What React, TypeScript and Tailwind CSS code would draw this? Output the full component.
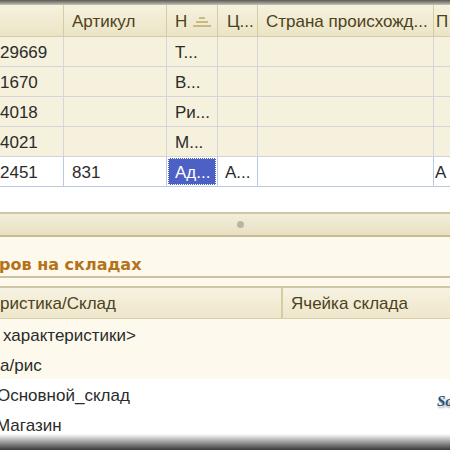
import React from "react";

const cols = [64, 103, 51, 40, 176, 16];

function HeaderCell({ w, children, last }: { w: number; children?: React.ReactNode; last?: boolean }) {
  return (
    <div
      className={`shrink-0 h-full flex items-center pt-[2px] overflow-hidden whitespace-nowrap ${last ? "" : "border-r border-[#d6cca3]"}`}
      style={{ width: w }}
    >
      {children}
    </div>
  );
}

function Cell({ w, children, last, sel }: { w: number; children?: React.ReactNode; last?: boolean; sel?: boolean }) {
  return (
    <div
      className={`shrink-0 h-full flex items-center pt-[2px] overflow-hidden whitespace-nowrap ${last ? "" : sel ? "border-r border-[#b9cbe4]" : "border-r border-[#d3d5da]"}`}
      style={{ width: w }}
    >
      {children}
    </div>
  );
}

const rows = [
  ["29669", "", "Т...", "", "", ""],
  ["1670", "", "В...", "", "", ""],
  ["4018", "", "Ри...", "", "", ""],
  ["4021", "", "М...", "", "", ""],
];

export default function App() {
  return (
    <div
      className="w-[450px] h-[450px] overflow-hidden relative bg-white text-[17px] leading-[20px] text-[#2b2b2b]"
      style={{ fontFamily: '"Liberation Sans", Arial, sans-serif' }}
    >
      {/* top shade */}
      <div className="h-[5px] bg-gradient-to-b from-[#5a5a5a] to-[#c9c4ae]" />
      {/* header */}
      <div className="h-[32px] flex bg-gradient-to-b from-[#f6f2de] to-[#ebe4c6] border-b border-[#d5cba6] text-[#4d4120]">
        <HeaderCell w={cols[0]} />
        <HeaderCell w={cols[1]}>
          <span className="pl-[8px]">Артикул</span>
        </HeaderCell>
        <HeaderCell w={cols[2]}>
          <span className="pl-[8px] flex items-center gap-[5px]">
            <span>Н</span>
            <svg width="20" height="12" viewBox="0 0 20 12">
              <rect x="7" y="1" width="6" height="2" fill="#c9b985" />
              <rect x="4" y="5" width="12" height="2" fill="#c9b985" />
              <rect x="1" y="9" width="18" height="2" fill="#c9b985" />
            </svg>
          </span>
        </HeaderCell>
        <HeaderCell w={cols[3]}>
          <span className="pl-[9px]">Ц...</span>
        </HeaderCell>
        <HeaderCell w={cols[4]}>
          <span className="pl-[8px]">Страна происхожд...</span>
        </HeaderCell>
        <HeaderCell w={cols[5]} last>
          <span className="pl-[2px]">П</span>
        </HeaderCell>
      </div>
      {/* rows */}
      {rows.map((r, i) => (
        <div key={i} className="h-[30px] flex bg-[#f5f1dc] border-b border-[#d3d5da]">
          <Cell w={cols[0]}>{r[0]}</Cell>
          <Cell w={cols[1]} />
          <Cell w={cols[2]}>
            <span className="pl-[8px]">{r[2]}</span>
          </Cell>
          <Cell w={cols[3]} />
          <Cell w={cols[4]} />
          <Cell w={cols[5]} last />
        </div>
      ))}
      <div className="h-[30px] flex bg-white border-b border-[#b9cbe4]">
        <Cell w={cols[0]} sel>2451</Cell>
        <Cell w={cols[1]} sel>
          <span className="pl-[8px]">831</span>
        </Cell>
        <div className="shrink-0 h-full p-[1px] border-r border-[#b9cbe4]" style={{ width: cols[2] }}>
          <div className="h-full bg-[#4d60c3] border border-dotted border-white flex items-center pt-[2px] text-white">
            <span className="pl-[6px]">Ад...</span>
          </div>
        </div>
        <Cell w={cols[3]} sel>
          <span className="pl-[7px]">А...</span>
        </Cell>
        <Cell w={cols[4]} sel />
        <Cell w={cols[5]} last>
          <span className="pl-[1px]">А</span>
        </Cell>
      </div>
      <div className="h-[25px] bg-white" />
      {/* splitter */}
      <div className="h-[25px] border-t-2 border-b-2 border-t-[#cfc6a2] border-b-[#c6bd98] bg-gradient-to-b from-[#f2eed9] to-[#e7e0c2] flex items-center justify-center">
        <div className="w-[7px] h-[7px] rounded-full bg-[#b8b4a8] ml-[30px]" />
      </div>
      {/* lower panel */}
      <div className="bg-[#fdf9ec]">
        <div className="h-[41px] flex items-end pb-[1px] border-b-2 border-[#cbc3a3]">
          <span
            className="font-bold text-[#b5721b] text-[16px] ml-[-1px]"
            style={{ fontFamily: '"DejaVu Sans", Verdana, sans-serif' }}
          >
            ров на складах
          </span>
        </div>
        <div className="h-[8px]" />
        <div className="h-[33px] flex border-t-2 border-b border-t-[#cfc7a6] border-b-[#d9d0ad] bg-gradient-to-b from-[#f7f3e2] to-[#ede6ca] text-[#4d4120]">
          <div className="w-[283px] h-full border-r-2 border-[#d6cca3] flex items-center pt-[2px]">ристика/Склад</div>
          <div className="flex items-center pt-[2px] pl-[8px]">Ячейка склада</div>
        </div>
        <div className="h-[30px] flex items-center pt-[3px] pl-[3px]">характеристики&gt;</div>
        <div className="h-[30px] flex items-center pt-[3px]">а/рис</div>
      </div>
      <div className="bg-white relative">
        <div className="h-[30px] flex items-center pt-[3px] ml-[-3px]">Основной_склад</div>
        <div className="h-[30px] flex items-center pt-[3px] ml-[-4px]">Магазин</div>
        <div
          className="absolute left-[437px] top-[12px] font-bold italic text-[#24527f] text-[15px]"
          style={{ fontFamily: '"Liberation Serif", serif', textShadow: "1px 2px 2px rgba(0,0,0,0.35)" }}
        >
          So
        </div>
      </div>
      {/* bottom shade */}
      <div className="absolute left-0 right-0 bottom-0 h-[16px] bg-gradient-to-b from-[rgba(255,255,255,0)] to-[#3a3a3a]" />
    </div>
  );
}
